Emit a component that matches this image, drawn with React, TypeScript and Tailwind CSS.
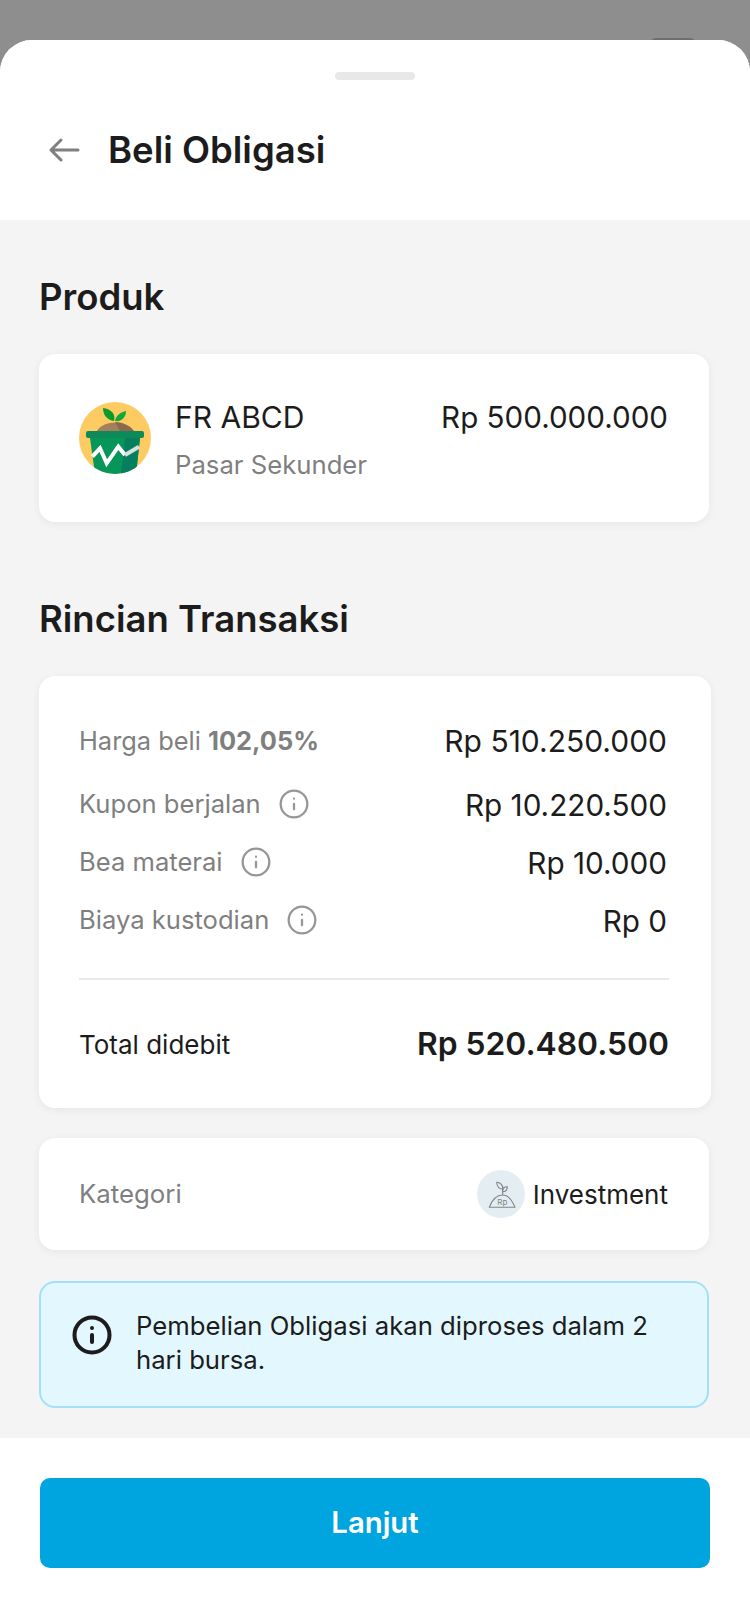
import { Info } from 'lucide-react';

const rows = [
  { label: 'Kupon berjalan', value: 'Rp 10.220.500' },
  { label: 'Bea materai', value: 'Rp 10.000' },
  { label: 'Biaya kustodian', value: 'Rp 0' },
];

function PotLogo() {
  return (
    <svg viewBox="0 0 72 72" className="w-[72px] h-[72px] shrink-0">
      <defs>
        <clipPath id="potClip">
          <circle cx="36" cy="36" r="36" />
        </clipPath>
      </defs>
      <circle cx="36" cy="36" r="36" fill="#fdcb62" />
      <g clipPath="url(#potClip)">
        <path d="M17 31 C22 17 50 17 56 31 Z" fill="#a57f5c" />
        <path d="M36 20 C44 20 52 24 56 31 H42 Z" fill="#8a6a4c" />
        <path d="M9 29 H63 Q65 29 65 31 V34 Q65 36 63 36 H9 Q7 36 7 34 V31 Q7 29 9 29 Z" fill="#0c8a5a" />
        <path d="M11 36 H61 L57 72 H16 Z" fill="#069659" />
        <path d="M46 36 H61 L57 72 H42 Z" fill="#067f5e" />
        <path d="M13.3 54.7 L21 46.3 L27.7 61.3 L39.3 44.7 L46 53" fill="none" stroke="#ffffff" strokeWidth="4" />
        <path d="M46 53 L60 44.7" fill="none" stroke="#d8dfe0" strokeWidth="4" />
      </g>
      <path d="M35 19 C28 18 24 13 24 6 C32 7 37 12 35 19 Z" fill="#0b9b2c" />
      <path d="M36 19 C37 13 42 10 47 9 C47 15 43 20 36 19 Z" fill="#13a838" />
    </svg>
  );
}

function InvestmentIcon() {
  return (
    <div className="w-12 h-12 rounded-full bg-[#e4eef2] flex items-center justify-center shrink-0">
      <svg viewBox="0 0 48 48" className="w-12 h-12" fill="none" stroke="#7f8686" strokeWidth="1.1">
        <path d="M12.3 37.3 C15 30 20 25 25.7 25 C31 25 35 30 38 37.3 Z" strokeLinejoin="round" />
        <path d="M25.7 25 V16" />
        <path d="M25.7 19.3 C22 19 20 16 19.7 12.3 C23 12.5 26.5 15 25.7 19.3 Z" />
        <path d="M25.5 21.7 C28.5 21.7 30.3 19.5 30.3 16.7 C27.5 16.7 25 18.5 25.5 21.7 Z" />
        <text x="25.3" y="34.5" fontSize="8" textAnchor="middle" fill="#7f8686" stroke="none" style={{ fontFamily: 'Inter, sans-serif' }}>Rp</text>
      </svg>
    </div>
  );
}

export default function App() {
  return (
    <div className="relative w-[750px] h-[1624px] overflow-hidden bg-[#8e8e8e] font-['Inter',sans-serif] text-[#1c1c1c]">
      <div className="absolute inset-x-0 top-0 flex">
        <div className="ml-[76px] mt-[36px] text-[28px] font-semibold leading-[34px] text-[#1c1c1c]">9:41</div>
        <div className="ml-auto mr-[54px] mt-[38px] w-[46px] h-[22px] rounded-[6px] bg-[#6f6f6f]" />
      </div>

      <div className="absolute inset-x-0 top-[40px] bottom-0 flex flex-col overflow-hidden rounded-t-[32px] bg-[#f4f4f4]">
        {/* header */}
        <div className="h-[180px] shrink-0 bg-white relative">
          <div className="absolute left-[335px] top-[32px] w-[80px] h-[8px] rounded-full bg-[#e8e8e8]" />
          <div className="flex items-center pl-[49px] pt-[90px]">
            <svg viewBox="0 0 32 24" className="w-[32px] h-[24px]" fill="none" stroke="#7f7f7f" strokeWidth="3" strokeLinecap="round" strokeLinejoin="round">
              <path d="M2 12 H29 M12 2 L2 12 L12 22" />
            </svg>
            <h1 className="ml-[27px] text-[36.5px] leading-[40px] font-semibold">Beli Obligasi</h1>
          </div>
        </div>

        <div className="flex-1 px-[39px]">
          <h2 className="mt-[57px] text-[36.5px] leading-[40px] font-semibold">Produk</h2>

          <div className="mt-[37px] h-[168px] w-[670px] rounded-[16px] bg-white shadow-[0_2px_8px_rgba(0,0,0,0.06)] flex items-start pl-[40px] pr-[41px] pt-[48px]">
            <PotLogo />
            <div className="ml-[24px] flex-1">
              <div className="text-[30px] leading-[34px] -mt-[2px]">FR ABCD</div>
              <div className="mt-[15px] text-[25.7px] leading-[32px] text-[#7f7f7f]">Pasar Sekunder</div>
            </div>
            <div className="text-[29.6px] leading-[34px] -mt-[2px]">Rp 500.000.000</div>
          </div>

          <h2 className="mt-[77px] text-[36.5px] leading-[40px] font-semibold">Rincian Transaksi</h2>

          <div className="mt-[37px] h-[432px] w-[672px] rounded-[16px] bg-white shadow-[0_2px_8px_rgba(0,0,0,0.06)] pl-[40px] pr-[42px] pt-[48px]">
            <div className="flex items-center justify-between h-[34px] pr-[2px]">
              <span className="text-[25.4px] text-[#7f7f7f]">
                Harga beli <span className="font-bold">102,05%</span>
              </span>
              <span className="text-[30px] leading-[34px]">Rp 510.250.000</span>
            </div>
            <div className="mt-[29px] flex flex-col gap-[24px]">
              {rows.map(row => (
                <div key={row.label} className="flex items-center justify-between h-[34px] pr-[2px]">
                  <span className="flex items-center gap-[17px] text-[25.6px] text-[#7f7f7f]">
                    {row.label}
                    <Info className="w-[32px] h-[32px] text-[#969696]" strokeWidth={1.7} />
                  </span>
                  <span className="text-[29.7px] leading-[34px] pt-[2px]">{row.value}</span>
                </div>
              ))}
            </div>
            <div className="mt-[41px] h-[2px] bg-[#e6e8ea]" />
            <div className="mt-[44px] flex items-center justify-between h-[40px]">
              <span className="text-[26px]">Total didebit</span>
              <span className="text-[31.8px] font-semibold">Rp 520.480.500</span>
            </div>
          </div>

          <div className="mt-[30px] h-[112px] w-[670px] rounded-[16px] bg-white shadow-[0_2px_8px_rgba(0,0,0,0.06)] flex items-center justify-between pl-[40px] pr-[41px]">
            <span className="text-[25.8px] text-[#7f7f7f]">Kategori</span>
            <span className="flex items-center gap-[8px] text-[26px]">
              <InvestmentIcon />
              Investment
            </span>
          </div>

          <div className="mt-[31px] h-[127px] w-[670px] rounded-[16px] border-2 border-[#a3e0f7] bg-[#e3f7fe] flex items-start pl-[30px] pr-[40px] pt-[26px]">
            <Info className="w-[42px] h-[42px] shrink-0 mt-[5px] text-[#1c1c1c]" strokeWidth={2.3} />
            <p className="ml-[23px] text-[25.7px] leading-[34px]">Pembelian Obligasi akan diproses dalam 2 hari bursa.</p>
          </div>
        </div>

        {/* footer */}
        <div className="h-[186px] shrink-0 bg-white px-[40px] pt-[40px]">
          <button className="w-[670px] h-[90px] rounded-[10px] bg-[#00a5e0] text-white text-[29.3px] font-semibold">Lanjut</button>
        </div>
      </div>
    </div>
  );
}
